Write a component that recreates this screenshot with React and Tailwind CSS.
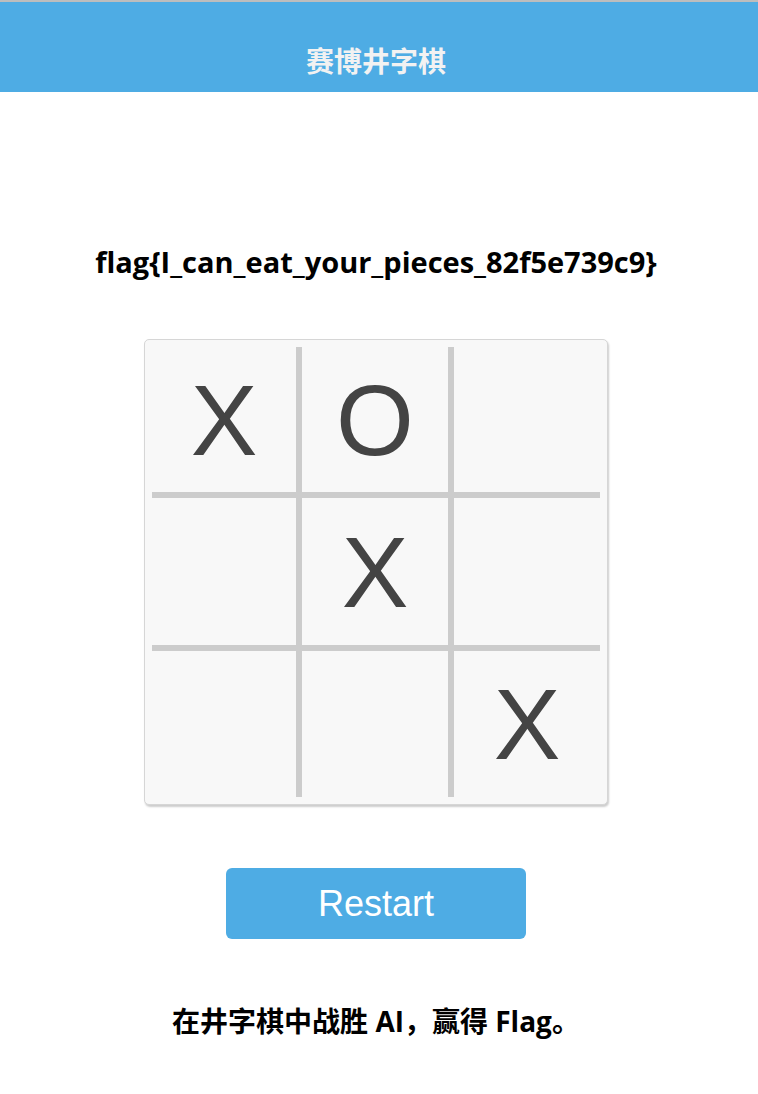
import React from "react";

const cells = ["X", "O", "", "", "X", "", "", "", "X"];

export default function App() {
  return (
    <div className="min-h-[1094px] w-[758px] bg-white" style={{ fontFamily: '"Open Sans", "Noto Sans CJK SC", sans-serif' }}>
      <div className="border-t-2 border-[#bdbdbd] bg-[#4eace4] h-[92px] flex items-end justify-center pr-[6px] pb-[18px]">
        <h1 className="text-[28px] font-bold text-[#f2f2f2] leading-none" style={{ fontFamily: '"Noto Sans CJK SC", sans-serif' }}>赛博井字棋</h1>
      </div>
      <div className="flex flex-col items-center pr-[6px]">
        <p className="mt-[150px] text-[29px] font-bold text-black leading-[40px]">flag{"{"}I_can_eat_your_pieces_82f5e739c9{"}"}</p>
        <div className="mt-[57px] w-[464px] h-[466px] p-[7px] bg-[#f8f8f8] border border-[#d6d6d6] rounded-[5px] shadow-[1px_2px_2px_rgba(0,0,0,0.2)]">
          <div className="grid grid-cols-[144px_146px_146px] grid-rows-[145px_147px_146px] gap-[6px] bg-[#cccccc] w-[448px] h-[450px]">
            {cells.map((c, i) => (
              <div key={i} className="bg-[#f8f8f8] flex items-center justify-center text-[100px] text-[#444444] leading-none" style={{ fontFamily: '"Liberation Sans", Arial, sans-serif' }}>
                {c}
              </div>
            ))}
          </div>
        </div>
        <button className="mt-[63px] w-[300px] h-[71px] rounded-[6px] bg-[#4eace4] text-white text-[36px] leading-none" style={{ fontFamily: '"Liberation Sans", Arial, sans-serif' }}>
          Restart
        </button>
        <p className="mt-[62px] text-[28px] font-bold text-black leading-[40px]">在井字棋中战胜 AI，赢得 Flag。</p>
      </div>
    </div>
  );
}
